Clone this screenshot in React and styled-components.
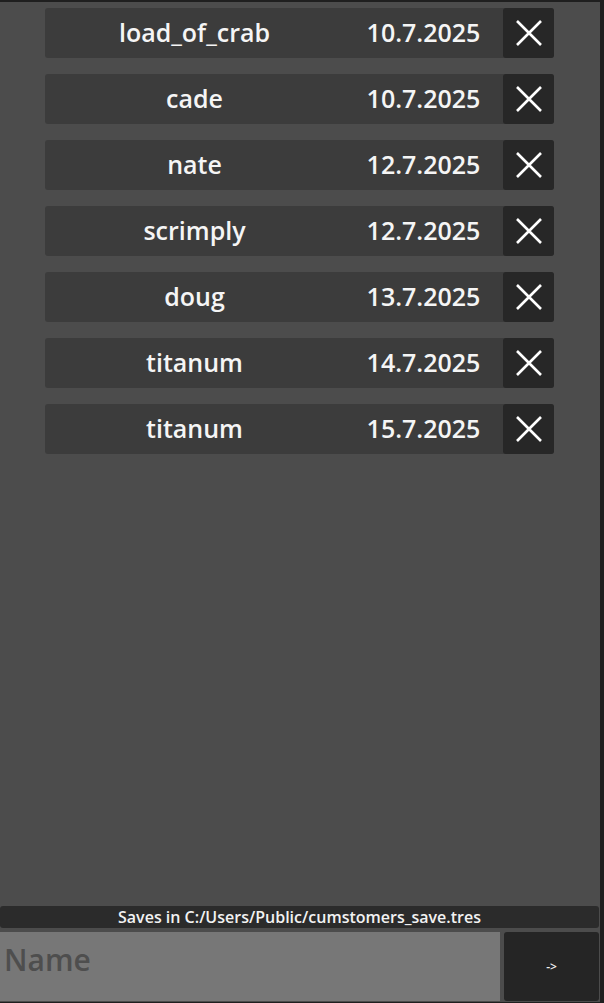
import React from "react";
import styled, { createGlobalStyle } from "styled-components";

const Global = createGlobalStyle`
  html, body { margin: 0; padding: 0; background: #1f1f1f; }
  body { font-family: "Open Sans", "Noto Sans", sans-serif; }
  * { box-sizing: border-box; }
`;

const Screen = styled.div`
  margin-top: 2px;
  width: 600px;
  height: 1000px;
  background: #4c4c4c;
  display: flex;
  flex-direction: column;
  padding-bottom: 1px;
`;

const List = styled.div`
  flex: 1;
  display: flex;
  flex-direction: column;
  gap: 16px;
  padding: 6px 46px 0 45px;
`;

const Row = styled.div`
  display: flex;
  height: 50px;
  background: #3c3c3c;
  border-radius: 3px;
  color: #f5f5f5;
  font-weight: 600;
  font-size: 25px;
`;

const Cell = styled.div`
  width: ${(p) => p.$w}px;
  display: flex;
  align-items: center;
  justify-content: center;
  padding-bottom: 3px;
`;

const DeleteBtn = styled.button`
  width: 51px;
  height: 50px;
  border: none;
  border-radius: 3px;
  background: #272727;
  display: flex;
  align-items: center;
  justify-content: center;
  padding: 0;
  cursor: pointer;
`;

const StatusBar = styled.div`
  height: 22px;
  margin-right: 1px;
  background: #2b2b2b;
  border-radius: 3px;
  color: #f2f2f2;
  font-size: 16px;
  font-weight: 600;
  display: flex;
  align-items: center;
  justify-content: center;
`;

const InputRow = styled.div`
  display: flex;
  gap: 4px;
  height: 69px;
  margin-top: 4px;
  margin-right: 1px;
`;

const NameInput = styled.input`
  width: 500px;
  height: 100%;
  border: none;
  outline: none;
  background: #777777;
  font-family: "Open Sans", "Noto Sans", sans-serif;
  font-size: 30px;
  font-weight: 600;
  color: #eee;
  padding: 0 0 14px 4px;
  &::placeholder { color: #4e4e4e; }
`;

const SubmitBtn = styled.button`
  flex: 1;
  border: none;
  border-radius: 3px;
  background: #252525;
  color: #f0f0f0;
  font-family: "Open Sans", "Noto Sans", sans-serif;
  font-size: 12px;
  font-weight: 600;
  padding: 0;
  cursor: pointer;
`;

const Cross = () => (
  <svg width="28" height="28" viewBox="0 0 28 28">
    <path d="M2 2 L26 26 M26 2 L2 26" stroke="#fff" strokeWidth="2.6" strokeLinecap="butt" />
  </svg>
);

const saves = [
  ["load_of_crab", "10.7.2025"],
  ["cade", "10.7.2025"],
  ["nate", "12.7.2025"],
  ["scrimply", "12.7.2025"],
  ["doug", "13.7.2025"],
  ["titanum", "14.7.2025"],
  ["titanum", "15.7.2025"],
];

export default function App() {
  return (
    <>
      <Global />
      <Screen>
        <List>
          {saves.map(([name, date], i) => (
            <Row key={i}>
              <Cell $w={299}>{name}</Cell>
              <Cell $w={159}>{date}</Cell>
              <DeleteBtn aria-label="delete"><Cross /></DeleteBtn>
            </Row>
          ))}
        </List>
        <StatusBar>Saves in C:/Users/Public/cumstomers_save.tres</StatusBar>
        <InputRow>
          <NameInput placeholder="Name" />
          <SubmitBtn>-&gt;</SubmitBtn>
        </InputRow>
      </Screen>
    </>
  );
}
